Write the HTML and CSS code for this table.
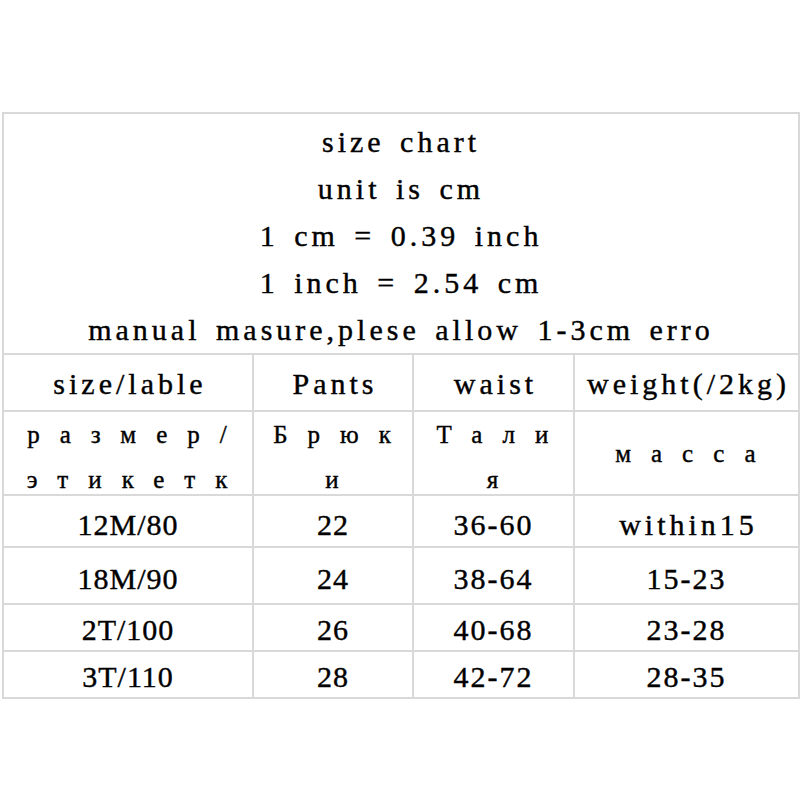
FILE: index.html
```html
<!DOCTYPE html>
<html lang="en">
<head>
<meta charset="utf-8">
<title>size chart</title>
<link rel="stylesheet" href="styles.css">
</head>
<body>
<table class="chart">
  <colgroup>
    <col class="c1"><col class="c2"><col class="c3"><col class="c4">
  </colgroup>
  <tr class="r-title">
    <td colspan="4" class="title">
      <div>size chart</div>
      <div>unit is cm</div>
      <div>1 cm = 0.39 inch</div>
      <div>1 inch = 2.54 cm</div>
      <div>manual masure,plese allow 1-3cm erro</div>
    </td>
  </tr>
  <tr class="r-head">
    <td class="txt">size/lable</td>
    <td class="txt">Pants</td>
    <td class="txt">waist</td>
    <td class="txt">weight(/2kg)</td>
  </tr>
  <tr class="r-ru">
    <td class="ru-cell"><div class="ru">размер/этикетк</div></td>
    <td class="ru-cell"><div class="ru">Брюки</div></td>
    <td class="ru-cell"><div class="ru">Талия</div></td>
    <td class="ru-cell"><div class="ru ru-mid">масса</div></td>
  </tr>
  <tr class="r-d1">
    <td class="num">12M/80</td>
    <td class="num">22</td>
    <td class="num range">36-60</td>
    <td class="txt">within15</td>
  </tr>
  <tr class="r-d2">
    <td class="num">18M/90</td>
    <td class="num">24</td>
    <td class="num range">38-64</td>
    <td class="num range">15-23</td>
  </tr>
  <tr class="r-d3">
    <td class="num">2T/100</td>
    <td class="num">26</td>
    <td class="num range">40-68</td>
    <td class="num range">23-28</td>
  </tr>
  <tr class="r-d4">
    <td class="num">3T/110</td>
    <td class="num">28</td>
    <td class="num range">42-72</td>
    <td class="num range">28-35</td>
  </tr>
</table>
</body>
</html>
```

FILE: styles.css
```css
html, body {
  margin: 0;
  padding: 0;
  background: #ffffff;
}

body {
  width: 800px;
  height: 800px;
  padding-top: 112px;
  box-sizing: border-box;
  font-family: "Liberation Serif", "Times New Roman", serif;
  color: #000;
  -webkit-text-stroke: 0.4px #000;
}

.chart {
  margin-left: 2px;
  width: 796px;
  table-layout: fixed;
  border-collapse: collapse;
  font-size: 30px;
}

.c1 { width: 250px; }
.c2 { width: 160px; }
.c3 { width: 161px; }
.c4 { width: 225px; }

.chart td {
  border: 2px solid #d9d9d9;
  padding: 0;
  text-align: center;
  white-space: nowrap;
}

.r-title { height: 239px; }
.title {
  vertical-align: top;
  padding-top: 4px !important;
  line-height: 47px;
  letter-spacing: 4px;
  word-spacing: 4px;
}

.txt {
  letter-spacing: 4px;
  padding-left: 4px !important;
  line-height: 34px;
  vertical-align: bottom;
}

.num {
  letter-spacing: 1px;
  line-height: 34px;
  vertical-align: bottom;
}

.range {
  letter-spacing: 2px;
}

.r-head { height: 57px; }
.r-head td { padding-bottom: 9px; }

.r-ru { height: 84px; }
.ru-cell {
  vertical-align: top;
}
.ru {
  box-sizing: border-box;
  height: 82px;
  font-size: 25px;
  line-height: 45px;
  letter-spacing: 20px;
  padding-left: 18px;
  white-space: normal;
  word-break: break-all;
  text-align: center;
}
.ru-mid { padding-top: 19px; }

.r-d1 { height: 52px; }
.r-d1 td { padding-bottom: 4px; }
.r-d2 { height: 57px; }
.r-d2 td { padding-bottom: 7px; }
.r-d3 { height: 47px; }
.r-d3 td { padding-bottom: 3px; }
.r-d4 { height: 47px; }
.r-d4 td { padding-bottom: 3px; }
```
